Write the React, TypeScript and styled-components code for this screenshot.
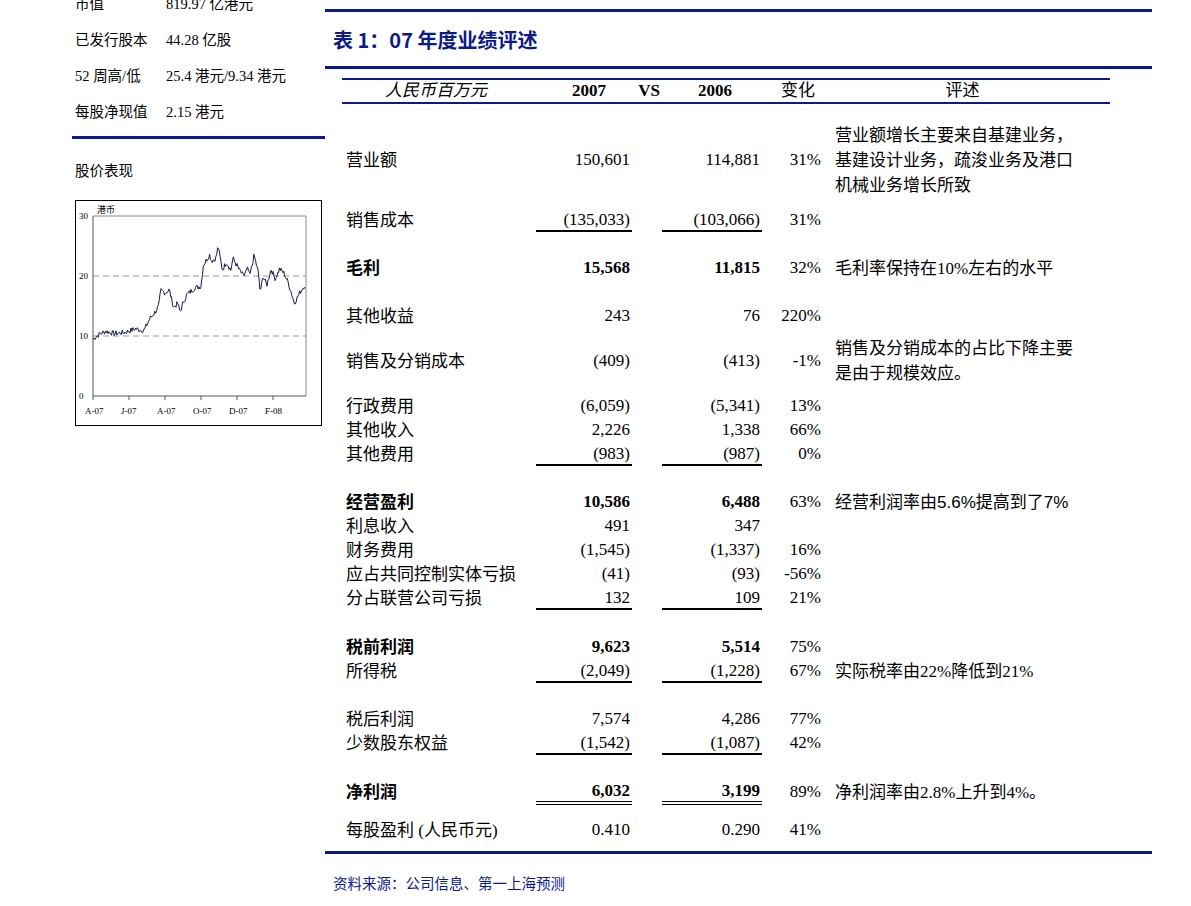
import React from 'react';
import styled, { createGlobalStyle } from 'styled-components';

const Global = createGlobalStyle`
  body { margin: 0; background: #fff; font-family: "Liberation Serif", "Noto Sans CJK SC", serif; color: #000; }
`;

const Page = styled.div`
  width: 1191px;
  height: 906px;
  display: flex;
  overflow: hidden;
`;

const Left = styled.div`
  width: 253px;
  margin-left: 72px;
  margin-top: -16px;
`;

const InfoRow = styled.div`
  height: 36px;
  display: flex;
  align-items: center;
  font-size: 14.5px;
  padding-left: 3px;
`;

const InfoLabel = styled.span`
  width: 91px;
`;

const LeftRule = styled.div`
  height: 3px;
  background: #0b1a8a;
  margin-top: 8px;
`;

const SubHead = styled.div`
  font-size: 14.5px;
  margin: 20px 0 0 3px;
`;

const ChartBox = styled.div`
  margin: 20px 0 0 3px;
  width: 245px;
  height: 224px;
  border: 1px solid #000;
`;

const Right = styled.div`
  width: 827px;
  margin-top: 9px;
`;

const Rule = styled.div<{ $top?: number }>`
  height: 3px;
  background: #0b1a8a;
  margin-top: ${(p) => p.$top ?? 0}px;
`;

const Title = styled.div`
  color: #0b1a8a;
  font-family: "Noto Sans CJK SC", "Liberation Sans", sans-serif;
  font-weight: bold;
  font-size: 20px;
  height: 54px;
  display: flex;
  align-items: center;
  padding-left: 8px;
`;

const Table = styled.div`
  margin: 9px 0 0 17px;
  width: 768px;
`;

const Head = styled.div`
  display: grid;
  grid-template-columns: 188px 76px 54px 72px 83px 1fr;
  border-top: 2px solid #0b1a8a;
  border-bottom: 2px solid #0b1a8a;
  height: 22px;
  align-items: center;
  font-size: 17px;
  line-height: 22px;
`;

const HeadCell = styled.span<{ $align?: string; $bold?: boolean; $italic?: boolean }>`
  text-align: ${(p) => p.$align ?? 'center'};
  font-weight: ${(p) => (p.$bold ? 'bold' : 'normal')};
  font-style: ${(p) => (p.$italic ? 'italic' : 'normal')};
`;

const Row = styled.div<{ $h: number; $gap: number; $bold?: boolean }>`
  display: grid;
  grid-template-columns: 4px 190px 96px 30px 100px 59px 14px 1fr;
  height: ${(p) => p.$h}px;
  margin-top: ${(p) => p.$gap}px;
  align-items: center;
  font-size: 17px;
  line-height: 21px;
  font-weight: ${(p) => (p.$bold ? 'bold' : 'normal')};
`;

const Num = styled.span<{ $line?: 0 | 1 | 2 }>`
  text-align: right;
  padding-right: 2px;
  border-bottom: ${(p) => (p.$line === 1 ? '2px solid #000' : p.$line === 2 ? '4px double #000' : '2px solid transparent')};
`;

const Pct = styled.span`
  text-align: right;
  font-weight: normal;
  padding-bottom: 2px;
`;

const Comment = styled.span<{ $sans?: boolean }>`
  font-weight: normal;
  line-height: 25px;
  white-space: nowrap;
  font-family: ${(p) => (p.$sans ? '"Liberation Sans", "Noto Sans CJK SC", sans-serif' : 'inherit')};
`;

const Source = styled.div`
  color: #0b1a8a;
  font-size: 14.5px;
  margin: 18px 0 0 8px;
`;

type R = { l: string; a?: string; b?: string; p?: string; c?: React.ReactNode; h?: number; g: number; bold?: boolean; line?: 0 | 1 | 2; sans?: boolean };

const rows: R[] = [
  { l: '营业额', a: '150,601', b: '114,881', p: '31%', c: <>营业额增长主要来自基建业务，<br />基建设计业务，疏浚业务及港口<br />机械业务增长所致</>, h: 78, g: 17 },
  { l: '销售成本', a: '(135,033)', b: '(103,066)', p: '31%', line: 1, g: 9 },
  { l: '毛利', a: '15,568', b: '11,815', p: '32%', c: '毛利率保持在10%左右的水平', bold: true, g: 24 },
  { l: '其他收益', a: '243', b: '76', p: '220%', g: 24 },
  { l: '销售及分销成本', a: '(409)', b: '(413)', p: '-1%', c: <>销售及分销成本的占比下降主要<br />是由于规模效应。</>, h: 50, g: 8 },
  { l: '行政费用', a: '(6,059)', b: '(5,341)', p: '13%', g: 8 },
  { l: '其他收入', a: '2,226', b: '1,338', p: '66%', g: 0 },
  { l: '其他费用', a: '(983)', b: '(987)', p: '0%', line: 1, g: 0 },
  { l: '经营盈利', a: '10,586', b: '6,488', p: '63%', c: '经营利润率由5.6%提高到了7%', sans: true, bold: true, g: 24 },
  { l: '利息收入', a: '491', b: '347', g: 0 },
  { l: '财务费用', a: '(1,545)', b: '(1,337)', p: '16%', g: 0 },
  { l: '应占共同控制实体亏损', a: '(41)', b: '(93)', p: '-56%', g: 0 },
  { l: '分占联营公司亏损', a: '132', b: '109', p: '21%', line: 1, g: 0 },
  { l: '税前利润', a: '9,623', b: '5,514', p: '75%', bold: true, g: 25 },
  { l: '所得税', a: '(2,049)', b: '(1,228)', p: '67%', c: '实际税率由22%降低到21%', line: 1, g: 0 },
  { l: '税后利润', a: '7,574', b: '4,286', p: '77%', g: 24 },
  { l: '少数股东权益', a: '(1,542)', b: '(1,087)', p: '42%', line: 1, g: 0 },
  { l: '净利润', a: '6,032', b: '3,199', p: '89%', c: '净利润率由2.8%上升到4%。', bold: true, line: 2, g: 25 },
  { l: '每股盈利 (人民币元)', a: '0.410', b: '0.290', p: '41%', g: 14 },
];

const keys: [number, number][] = [
  [0, 9.5], [0.03, 10.3], [0.06, 10.8], [0.1, 10.4], [0.15, 10.6], [0.2, 11.2], [0.24, 10.9], [0.27, 13],
  [0.29, 13.8], [0.31, 15], [0.32, 17.6], [0.34, 17.2], [0.36, 17.7], [0.38, 14.8], [0.4, 15.4], [0.41, 14],
  [0.44, 16.8], [0.48, 18], [0.51, 18.3], [0.52, 21.8], [0.55, 23.5], [0.56, 22.5], [0.58, 23], [0.59, 25],
  [0.61, 21], [0.63, 22.3], [0.65, 21], [0.66, 23], [0.69, 21], [0.71, 20], [0.73, 21.2], [0.74, 20], [0.76, 23.5],
  [0.78, 20.5], [0.79, 17], [0.8, 20], [0.82, 18.5], [0.84, 21.2], [0.86, 19.5], [0.88, 21.2], [0.9, 20.5],
  [0.92, 19], [0.95, 15.5], [0.98, 17.5], [1, 18.5],
];

const pricePath = (() => {
  const x0 = 17, x1 = 229, yTop = 15, yBot = 195;
  const pts: string[] = [];
  let s = 7;
  for (let i = 0; i <= 240; i++) {
    const t = i / 240;
    let k = 0;
    while (k < keys.length - 2 && keys[k + 1][0] < t) k++;
    const [ta, va] = keys[k], [tb, vb] = keys[k + 1];
    s = (s * 9301 + 49297) % 233280;
    const v = va + ((vb - va) * (t - ta)) / (tb - ta) + (s / 233280 - 0.5) * 0.9;
    pts.push(`${(x0 + t * (x1 - x0)).toFixed(1)},${(yBot - (v / 30) * (yBot - yTop)).toFixed(1)}`);
  }
  return pts.join(' ');
})();

const Chart = () => (
  <svg width="245" height="224" style={{ display: 'block' }} fontFamily='"Liberation Serif", "Noto Sans CJK SC", serif' fontSize="9">
    <line x1="17" y1="15" x2="230" y2="15" stroke="#888" />
    <line x1="17" y1="75" x2="230" y2="75" stroke="#999" strokeDasharray="6 4" />
    <line x1="17" y1="135" x2="230" y2="135" stroke="#999" strokeDasharray="6 4" />
    <line x1="17" y1="15" x2="17" y2="195" stroke="#555" />
    <line x1="230" y1="15" x2="230" y2="195" stroke="#888" />
    <line x1="17" y1="195" x2="230" y2="195" stroke="#555" />
    {[0, 1, 2, 3, 4, 5].map((i) => (
      <line key={i} x1={17 + i * 36} y1="195" x2={17 + i * 36} y2="199" stroke="#555" />
    ))}
    <text x="21" y="12">港币</text>
    {[30, 20, 10, 0].map((v, i) => (
      <text key={v} x="3" y={18 + i * 60}>{v}</text>
    ))}
    {['A-07', 'J-07', 'A-07', 'O-07', 'D-07', 'F-08'].map((t, i) => (
      <text key={i} x={9 + i * 36} y="213">{t}</text>
    ))}
    <polyline points={pricePath} fill="none" stroke="#141850" strokeWidth="1" />
  </svg>
);

const info = [
  ['市值', '819.97 亿港元'],
  ['已发行股本', '44.28 亿股'],
  ['52 周高/低', '25.4 港元/9.34 港元'],
  ['每股净现值', '2.15 港元'],
];

export default function App() {
  return (
    <Page>
      <Global />
      <Left>
        {info.map(([a, b]) => (
          <InfoRow key={a}><InfoLabel>{a}</InfoLabel>{b}</InfoRow>
        ))}
        <LeftRule />
        <SubHead>股价表现</SubHead>
        <ChartBox><Chart /></ChartBox>
      </Left>
      <Right>
        <Rule />
        <Title>表 1：07 年度业绩评述</Title>
        <Rule />
        <Table>
          <Head>
            <HeadCell $italic>人民币百万元</HeadCell>
            <HeadCell $bold $align="right">2007</HeadCell>
            <HeadCell $bold $align="right">VS</HeadCell>
            <HeadCell $bold $align="right">2006</HeadCell>
            <HeadCell $align="right">变化</HeadCell>
            <HeadCell>评述</HeadCell>
          </Head>
          {rows.map((r, i) => (
            <Row key={i} $h={r.h ?? 24} $gap={r.g} $bold={r.bold}>
              <span />
              <span>{r.l}</span>
              <Num $line={r.line}>{r.a}</Num>
              <span />
              <Num $line={r.line}>{r.b}</Num>
              <Pct>{r.p}</Pct>
              <span />
              <Comment $sans={r.sans}>{r.c}</Comment>
            </Row>
          ))}
        </Table>
        <Rule $top={9} />
        <Source>资料来源：公司信息、第一上海预测</Source>
      </Right>
    </Page>
  );
}
